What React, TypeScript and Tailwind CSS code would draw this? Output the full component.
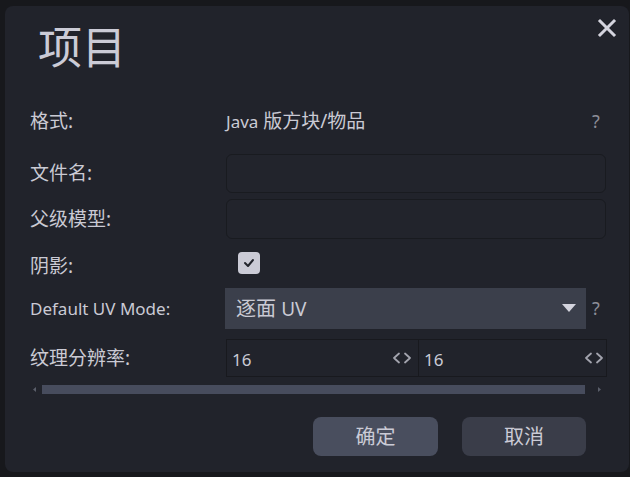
import React from "react";

const font = { fontFamily: '"Noto Sans", "Noto Sans CJK SC", sans-serif' };

function Chevrons() {
  return (
    <svg width="20" height="12" viewBox="0 0 20 12" fill="none" stroke="#a3a4ae" strokeWidth="1.8" strokeLinecap="round" strokeLinejoin="round">
      <path d="M7 1.5 L2 6 L7 10.5" />
      <path d="M13 1.5 L18 6 L13 10.5" />
    </svg>
  );
}

export default function App() {
  return (
    <div className="min-h-screen bg-[#17181c] pl-[5px] pt-[6px] text-[#cacad4]" style={font}>
      <div className="relative h-[466px] w-[624px] rounded-lg bg-[#21232b]">
        <button className="absolute right-[11px] top-[11px] flex h-[22px] w-[22px] items-center justify-center">
          <svg width="20" height="20" viewBox="0 0 20 20" stroke="#d4d4de" strokeWidth="3" strokeLinecap="square">
            <path d="M3 3 L17 17 M17 3 L3 17" />
          </svg>
        </button>

        <h1 className="h-[82px] pl-[33px] text-[44px] leading-[82px] text-[#cbcbd6]">项目</h1>

        <div className="pl-[25px]">
          <div className="mt-[15px] flex h-[36px] items-center">
            <div className="w-[196px] text-[19px]">格式:</div>
            <div className="w-[366px] text-[19px]">
              <span className="text-[17px]">Java</span> 版方块/物品
            </div>
            <div className="text-[18px] text-[#8c8d97]">?</div>
          </div>

          <div className="mt-[15px] flex h-[39px] items-center">
            <div className="w-[196px] text-[19px]">文件名:</div>
            <input className="h-[39px] w-[380px] rounded-md border border-[#191b20] bg-[#22242c] px-2 text-[16px] outline-none" />
          </div>

          <div className="mt-[6px] flex h-[40px] items-center">
            <div className="w-[196px] text-[19px]">父级模型:</div>
            <input className="h-[40px] w-[380px] rounded-md border border-[#191b20] bg-[#22242c] px-2 text-[16px] outline-none" />
          </div>

          <div className="mt-[13px] flex h-[22px] items-center">
            <div className="w-[196px] translate-y-[3px] text-[19px]">阴影:</div>
            <div className="ml-[12px] flex h-[22px] w-[22px] items-center justify-center rounded-[4px] bg-[#cbcbd6]">
              <svg width="12" height="10" viewBox="0 0 12 10" fill="none" stroke="#22242c" strokeWidth="2" strokeLinecap="round" strokeLinejoin="round">
                <path d="M2 5 L5 8 L10 2" />
              </svg>
            </div>
          </div>

          <div className="mt-[14px] flex h-[41px] items-center">
            <div className="w-[195px] text-[17px]">Default UV Mode:</div>
            <div className="flex h-[41px] w-[361px] items-center justify-between bg-[#3b3f4b] pl-[11px] pr-[10px]">
              <span className="text-[20px]">
                逐面 <span className="text-[19px]">UV</span>
              </span>
              <svg width="14" height="9" viewBox="0 0 14 9">
                <path d="M0 0 L14 0 L7 8 Z" fill="#d4d4de" />
              </svg>
            </div>
            <div className="ml-[6px] text-[18px] text-[#8c8d97]">?</div>
          </div>

          <div className="mt-[10px] flex h-[38px] items-center">
            <div className="w-[196px] text-[19px]">纹理分辨率:</div>
            <div className="flex h-[38px] w-[193px] items-center justify-between border border-[#18191e] pl-[5px] pr-[6px]">
              <span className="translate-y-[2px] text-[17px]">16</span>
              <Chevrons />
            </div>
            <div className="flex h-[38px] w-[188px] items-center justify-between border border-l-0 border-[#18191e] pl-[5px] pr-[2px]">
              <span className="translate-y-[2px] text-[17px]">16</span>
              <Chevrons />
            </div>
          </div>

          <div className="mt-[8px] flex h-[9px] w-[576px] items-center">
            <svg width="12" height="9" viewBox="0 0 12 9">
              <path d="M6 2 L3 4.5 L6 7 Z" fill="#5a5e6a" />
            </svg>
            <div className="h-[9px] w-[543px] bg-[#474c5d]" />
            <svg className="ml-[9px]" width="12" height="9" viewBox="0 0 12 9">
              <path d="M4 2 L7 4.5 L4 7 Z" fill="#5a5e6a" />
            </svg>
          </div>
        </div>

        <div className="mt-[23px] flex justify-end gap-[24px] pr-[43px]">
          <button className="h-[39px] w-[125px] rounded-lg bg-[#494e5e] text-[20px] text-[#cbcbd6]">确定</button>
          <button className="h-[39px] w-[124px] rounded-lg bg-[#3a3d49] text-[20px] text-[#cbcbd6]">取消</button>
        </div>
      </div>
    </div>
  );
}
